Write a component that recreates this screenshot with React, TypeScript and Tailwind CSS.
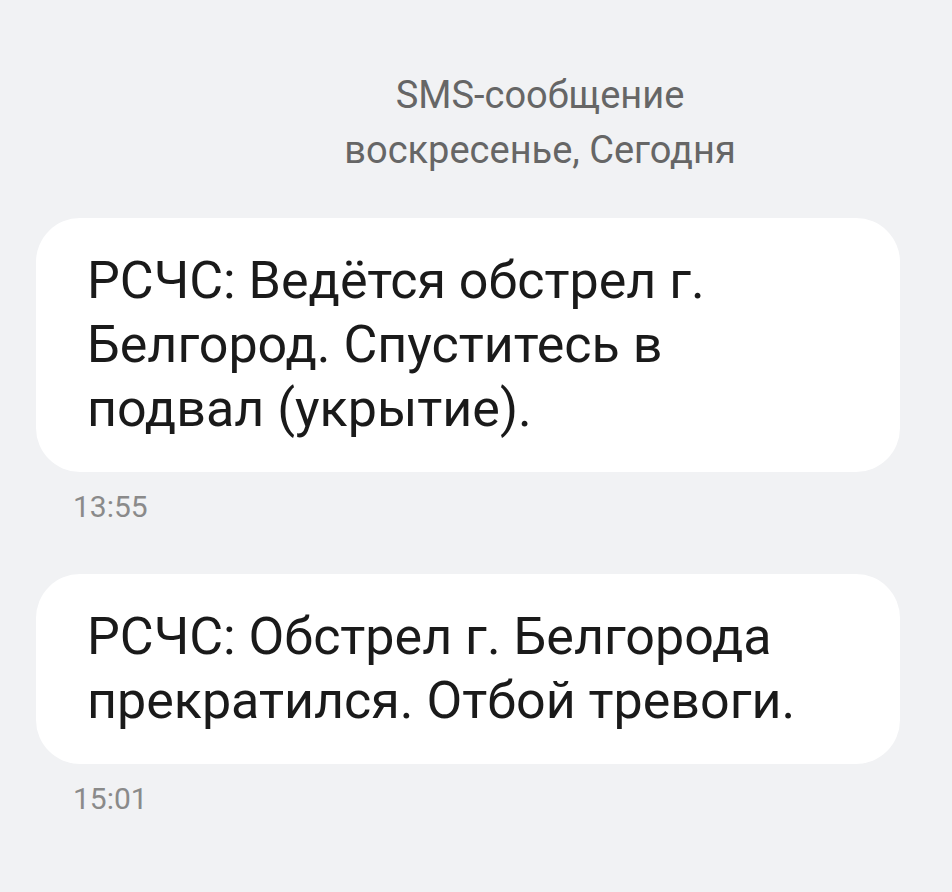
const messages = [
  {
    lines: ["РСЧС: Ведётся обстрел г.", "Белгород. Спуститесь в", "подвал (укрытие)."],
    time: "13:55",
  },
  {
    lines: ["РСЧС: Обстрел г. Белгорода", "прекратился. Отбой тревоги."],
    time: "15:01",
  },
];

export default function App() {
  return (
    <div className="min-h-[892px] w-[952px] bg-[#f1f2f4] font-['Roboto',sans-serif]">
      <div className="flex flex-col items-center pl-[128px] pt-[68px] text-[38px] text-[#666666]">
        <div className="leading-[55px]">SMS-сообщение</div>
        <div className="leading-[55px]">воскресенье, Сегодня</div>
      </div>

      <div className="mt-[40px] flex flex-col pl-[36px] pr-[52px]">
        {messages.map((m) => (
          <div key={m.time} className="mb-[49px] flex flex-col">
            <div className="rounded-[44px] bg-white py-[31px] pl-[51px] pr-[40px] text-[52px] leading-[64px] text-[#1a1a1a]">
              {m.lines.map((line) => (
                <div key={line} className="whitespace-nowrap">
                  {line}
                </div>
              ))}
            </div>
            <div className="mt-[17px] pl-[37px] text-[30px] leading-[36px] text-[#8a8a8a]">{m.time}</div>
          </div>
        ))}
      </div>
    </div>
  );
}
